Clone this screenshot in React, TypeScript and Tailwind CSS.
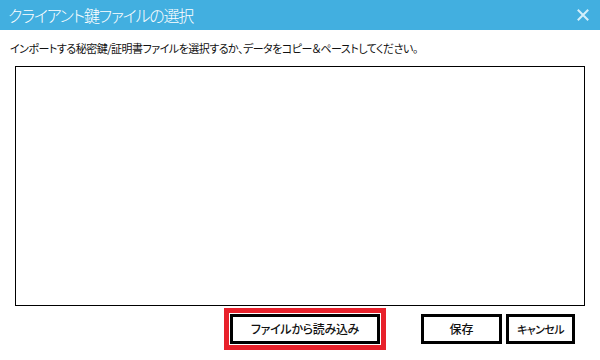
import React from "react";

const font = {
  fontFamily: '"Noto Sans CJK JP", "Noto Sans", sans-serif',
};

const CloseIcon = () => (
  <svg width="12" height="12" viewBox="0 0 12 12" className="block">
    <path d="M1.5 1.5 L10.5 10.5 M10.5 1.5 L1.5 10.5" stroke="#d3effb" strokeWidth="2" strokeLinecap="square" />
  </svg>
);

const App = () => {
  return (
    <div
      className="w-[600px] h-[360px] bg-white overflow-hidden [font-feature-settings:'palt']"
      style={font}
    >
      {/* Title bar */}
      <div className="h-[30px] bg-[#42afe0] flex items-center justify-between pl-[8px] pr-[11px]">
        <span className="text-white text-[16px] font-light leading-none tracking-[-1.2px]">クライアント鍵ファイルの選択</span>
        <CloseIcon />
      </div>

      {/* Body */}
      <div className="pt-[10px] px-[10px]">
        <p className="text-[11px] leading-[16px] tracking-[-0.5px] text-[#111]">
          インポートする秘密鍵/証明書ファイルを選択するか、データをコピー＆ペーストしてください。
        </p>
        <textarea className="block mt-[10px] ml-[5px] w-[570px] h-[240px] border border-black resize-none outline-none" />
      </div>

      {/* Buttons */}
      <div className="mt-[2px] flex items-center justify-end pr-[25px]">
        <div className="border-[5px] border-[#e8212b] p-px">
          <button className="w-[150px] h-[30px] border-[3px] border-black bg-white text-[12px] font-medium tracking-[-0.3px] text-[#111] flex items-center justify-center">
            ファイルから読み込み
          </button>
        </div>
        <button className="ml-[35px] w-[81px] h-[30px] border-[3px] border-black bg-white text-[12px] font-medium text-[#111] flex items-center justify-center">
          保存
        </button>
        <button className="ml-[4px] w-[69px] h-[30px] border-[3px] border-black bg-white text-[11px] font-medium tracking-[-0.6px] text-[#111] flex items-center justify-center">
          キャンセル
        </button>
      </div>
    </div>
  );
};

export default App;
